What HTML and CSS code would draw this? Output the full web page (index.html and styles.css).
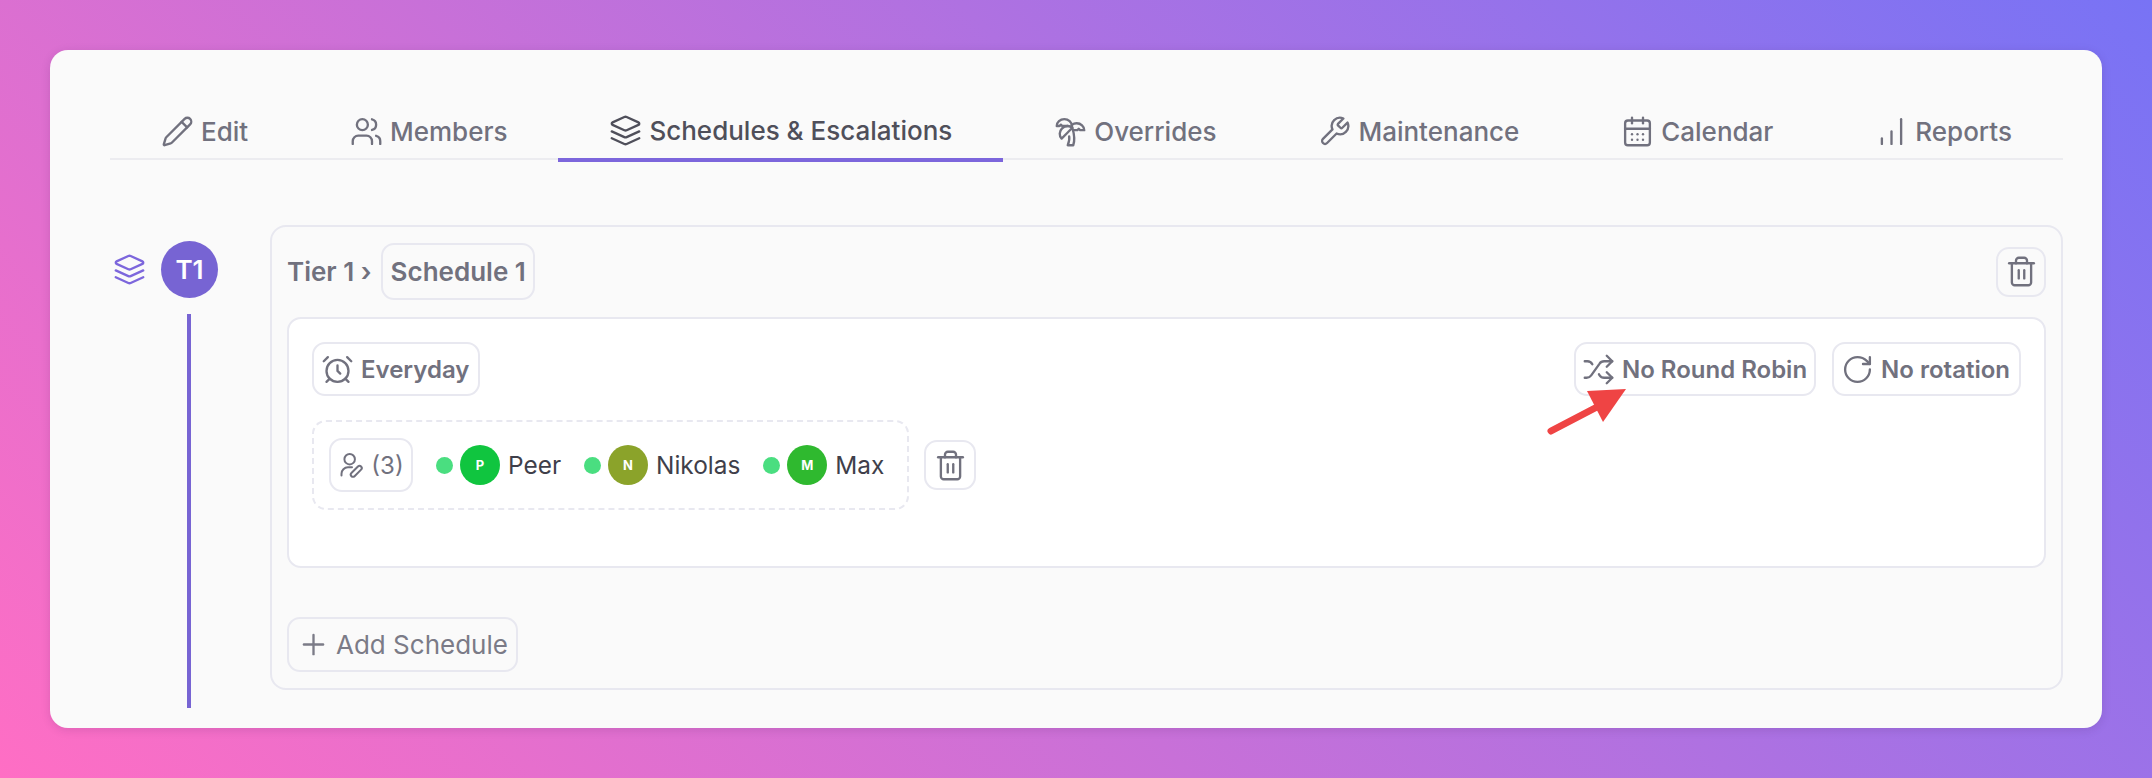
FILE: index.html
```html
<!DOCTYPE html>
<html lang="en">
<head>
<meta charset="utf-8">
<title>Schedules &amp; Escalations</title>
<link rel="stylesheet" href="styles.css">
</head>
<body>
<svg class="sprite" xmlns="http://www.w3.org/2000/svg" aria-hidden="true">
  <symbol id="i-pencil" viewBox="0 0 24 24"><path d="M21.174 6.812a1 1 0 0 0-3.986-3.987L3.842 16.174a2 2 0 0 0-.5.83l-1.321 4.352a.5.5 0 0 0 .623.622l4.353-1.32a2 2 0 0 0 .83-.497z"/><path d="m15 5 4 4"/></symbol>
  <symbol id="i-users" viewBox="0 0 24 24"><path d="M16 21v-2a4 4 0 0 0-4-4H6a4 4 0 0 0-4 4v2"/><circle cx="9" cy="7" r="4"/><path d="M22 21v-2a4 4 0 0 0-3-3.87"/><path d="M16 3.13a4 4 0 0 1 0 7.75"/></symbol>
  <symbol id="i-layers" viewBox="0 0 24 24"><path d="m12.83 2.18a2 2 0 0 0-1.66 0L2.6 6.08a1 1 0 0 0 0 1.83l8.58 3.91a2 2 0 0 0 1.66 0l8.58-3.9a1 1 0 0 0 0-1.83Z"/><path d="m22 17.65-9.17 4.16a2 2 0 0 1-1.66 0L2 17.65"/><path d="m22 12.65-9.17 4.16a2 2 0 0 1-1.66 0L2 12.65"/></symbol>
  <symbol id="i-palm" viewBox="0 0 24 24"><path d="M13 8c0-2.76-2.46-5-5.5-5S2 5.24 2 8h2l1-1 1 1h4"/><path d="M13 7.14A5.82 5.82 0 0 1 16.5 6c3.04 0 5.5 2.24 5.5 5h-3l-1-1-1 1h-3"/><path d="M5.89 9.71c-2.15 2.15-2.3 5.47-.35 7.43l4.24-4.25.7-.7.71-.71 2.12-2.12c-1.95-1.96-5.27-1.8-7.42.35"/><path d="M11 15.5c.5 2.5-.17 4.5-1 6.5h4c2-5.5-.5-12-1-14"/></symbol>
  <symbol id="i-wrench" viewBox="0 0 24 24"><path d="M14.7 6.3a1 1 0 0 0 0 1.4l1.6 1.6a1 1 0 0 0 1.4 0l3.77-3.77a6 6 0 0 1-7.94 7.94l-6.91 6.91a2.12 2.12 0 0 1-3-3l6.91-6.91a6 6 0 0 1 7.94-7.94l-3.76 3.76z"/></symbol>
  <symbol id="i-calendar" viewBox="0 0 24 24"><path d="M8 2v4"/><path d="M16 2v4"/><rect x="3" y="4" width="18" height="18" rx="2"/><path d="M3 10h18"/><path d="M8 14h.01"/><path d="M12 14h.01"/><path d="M16 14h.01"/><path d="M8 18h.01"/><path d="M12 18h.01"/><path d="M16 18h.01"/></symbol>
  <symbol id="i-bars" viewBox="0 0 24 24"><path d="M5 21v-4"/><path d="M12 21v-9"/><path d="M19 21V3"/></symbol>
  <symbol id="i-alarm" viewBox="0 0 24 24"><circle cx="12" cy="13" r="8"/><path d="M12 9v4l2 2"/><path d="M5 3 2 6"/><path d="m22 6-3-3"/><path d="M6.38 18.7 4 21"/><path d="M17.64 18.67 20 21"/></symbol>
  <symbol id="i-shuffle" viewBox="0 0 24 24"><path d="M2 18h1.4c1.3 0 2.5-.6 3.3-1.7l6.1-8.6c.7-1.1 2-1.7 3.3-1.7H22"/><path d="m18 2 4 4-4 4"/><path d="M2 6h1.9c1.5 0 2.9.9 3.6 2.2"/><path d="M22 18h-5.9c-1.3 0-2.6-.7-3.3-1.8l-.5-.8"/><path d="m18 14 4 4-4 4"/></symbol>
  <symbol id="i-rotate" viewBox="0 0 24 24"><path d="M21 12a9 9 0 1 1-9-9c2.52 0 4.93 1 6.74 2.74L21 8"/><path d="M21 3v5h-5"/></symbol>
  <symbol id="i-trash" viewBox="0 0 24 24"><path d="M3 6h18"/><path d="M19 6v14c0 1-1 2-2 2H7c-1 0-2-1-2-2V6"/><path d="M8 6V4c0-1 1-2 2-2h4c1 0 2 1 2 2v2"/><path d="M10 11v6"/><path d="M14 11v6"/></symbol>
  <symbol id="i-plus" viewBox="0 0 24 24"><path d="M5 12h14"/><path d="M12 5v14"/></symbol>
  <symbol id="i-user-edit" viewBox="0 0 24 24"><circle cx="10" cy="7" r="4.5"/><path d="M3 21v-1.5A5.5 5.5 0 0 1 8.5 14H12"/><path d="M14.2 21.6a1.9 1.9 0 0 1-2.7-2.7l5.6-5.6a1.9 1.9 0 0 1 2.7 2.7z"/></symbol>
</svg>

<main class="window">
  <nav class="tabs">
    <a class="tab"><svg class="icon"><use href="#i-pencil"/></svg>Edit</a>
    <a class="tab"><svg class="icon"><use href="#i-users"/></svg>Members</a>
    <a class="tab tab-active"><svg class="icon"><use href="#i-layers"/></svg>Schedules &amp; Escalations</a>
    <a class="tab"><svg class="icon"><use href="#i-palm"/></svg>Overrides</a>
    <a class="tab"><svg class="icon"><use href="#i-wrench"/></svg>Maintenance</a>
    <a class="tab"><svg class="icon"><use href="#i-calendar"/></svg>Calendar</a>
    <a class="tab"><svg class="icon"><use href="#i-bars"/></svg>Reports</a>
  </nav>

  <section class="tier">
    <div class="rail">
      <div class="rail-head">
        <svg class="icon icon-purple"><use href="#i-layers"/></svg>
        <span class="badge">T1</span>
      </div>
      <div class="rail-line"></div>
    </div>

    <div class="tier-card">
      <header class="tier-head">
        <div class="crumbs">
          <span class="crumb">Tier 1 ›</span>
          <button class="btn btn-title">Schedule 1</button>
        </div>
        <button class="btn btn-square"><svg class="icon"><use href="#i-trash"/></svg></button>
      </header>

      <div class="schedule">
        <div class="schedule-top">
          <button class="btn btn-pill btn-roomy"><svg class="icon"><use href="#i-alarm"/></svg>Everyday</button>
          <div class="schedule-actions">
            <button class="btn btn-pill"><svg class="icon"><use href="#i-shuffle"/></svg>No Round Robin</button>
            <button class="btn btn-pill btn-roomy"><svg class="icon"><use href="#i-rotate"/></svg>No rotation</button>
          </div>
        </div>
        <div class="members-row">
          <div class="members">
            <button class="btn btn-count"><svg class="icon icon-sm"><use href="#i-user-edit"/></svg>(3)</button>
            <div class="person"><i class="dot"></i><span class="avatar avatar-p">P</span><span class="name">Peer</span></div>
            <div class="person"><i class="dot"></i><span class="avatar avatar-n">N</span><span class="name">Nikolas</span></div>
            <div class="person"><i class="dot"></i><span class="avatar avatar-m">M</span><span class="name">Max</span></div>
          </div>
          <button class="btn btn-square btn-white"><svg class="icon"><use href="#i-trash"/></svg></button>
        </div>
      </div>

      <button class="btn btn-add"><svg class="icon"><use href="#i-plus"/></svg>Add Schedule</button>
    </div>
  </section>
</main>

<svg class="arrow" viewBox="0 0 90 50" xmlns="http://www.w3.org/2000/svg" aria-hidden="true">
  <path class="arrow-shaft" d="M4 45 50 21"/>
  <path class="arrow-head" d="M40 5 79 3 56 36z"/>
</svg>
</body>
</html>
```

FILE: styles.css
```css
* { box-sizing: border-box; }

html, body { height: 100%; }

body {
  margin: 0;
  padding: 50px;
  height: 778px;
  overflow: hidden;
  position: relative;
  background: linear-gradient(45deg, #ff6ec4, #7873f5);
  font-family: Inter, "Liberation Sans", sans-serif;
  color: #71717e;
}

.sprite { display: none; }

.icon {
  width: 33px;
  height: 33px;
  flex: none;
  fill: none;
  stroke: currentColor;
  stroke-width: 1.7;
  stroke-linecap: round;
  stroke-linejoin: round;
}

.icon-sm { width: 28px; height: 28px; }
.icon-purple { color: #7c66dc; }

.window {
  height: 678px;
  background: #fafafa;
  border-radius: 18px;
  padding: 50px 39px 20px 60px;
  display: flex;
  flex-direction: column;
  box-shadow: 0 2px 10px rgba(60, 30, 90, .15);
}

.tabs {
  display: flex;
  border-bottom: 2px solid #ececf0;
  height: 60px;
  flex: none;
}

.tab {
  flex: 1 1 auto;
  display: flex;
  align-items: center;
  justify-content: center;
  gap: 7px;
  padding: 0 50px;
  height: 62px;
  font-size: 26px;
  font-weight: 500;
  color: #71717e;
}

.tab-active {
  color: #4f4f5a;
  border-bottom: 4px solid #7c66dc;
  padding-top: 2px;
}

.tier {
  flex: 1;
  display: flex;
  margin-top: 65px;
  min-height: 0;
}

.rail {
  width: 160px;
  flex: none;
  padding-left: 3px;
  padding-top: 16px;
  display: flex;
  flex-direction: column;
}

.rail-head {
  display: flex;
  align-items: center;
  gap: 15px;
  height: 57px;
}

.badge {
  width: 57px;
  height: 57px;
  border-radius: 50%;
  background: #7764d3;
  color: #fff;
  display: flex;
  align-items: center;
  justify-content: center;
  font-size: 26px;
  font-weight: 600;
}

.rail-line {
  flex: 1;
  width: 4px;
  margin: 16px 0 0 74px;
  background: #7764d3;
}

.tier-card {
  flex: 1;
  height: 465px;
  border: 2px solid #e8e8f0;
  border-radius: 16px;
  padding: 16px 15px;
  display: flex;
  flex-direction: column;
  align-items: stretch;
}

.tier-head {
  display: flex;
  align-items: center;
  justify-content: space-between;
  height: 57px;
  margin-bottom: 17px;
}

.crumbs {
  display: flex;
  align-items: center;
  gap: 9px;
}

.crumb {
  font-size: 26px;
  font-weight: 600;
}

.btn {
  font: inherit;
  color: #71717e;
  background: transparent;
  border: 2px solid #e8e8f0;
  border-radius: 13px;
  display: inline-flex;
  align-items: center;
  justify-content: center;
}

.btn-title {
  height: 57px;
  padding: 0 7px 0 8px;
  font-size: 26px;
  font-weight: 600;
}

.btn-square {
  width: 50px;
  height: 50px;
  padding: 0;
}

.btn-white { background: #fff; width: 52px; }

.btn-pill {
  height: 54px;
  padding: 0 7px 0 6px;
  gap: 7px;
  font-size: 24px;
  font-weight: 600;
  background: #fff;
}

.btn-roomy { padding: 0 9px 0 7px; }

.btn-count {
  height: 54px;
  width: 84px;
  gap: 5px;
  font-size: 24px;
  font-weight: 400;
  background: #fff;
}

.btn-add {
  align-self: flex-start;
  height: 57px;
  margin-top: 49px;
  padding: 0 8px;
  gap: 6px;
  font-size: 26px;
  font-weight: 400;
  color: #7b7b87;
}

.schedule {
  height: 251px;
  flex: none;
  background: #fff;
  border: 2px solid #e8e8f0;
  border-radius: 14px;
  padding: 23px 23px;
}

.schedule-top {
  display: flex;
  justify-content: space-between;
  align-items: center;
}

.schedule-actions {
  display: flex;
  gap: 16px;
}

.members-row {
  display: flex;
  align-items: center;
  gap: 15px;
  margin-top: 24px;
}

.members {
  display: flex;
  align-items: center;
  gap: 23px;
  width: 597px;
  height: 90px;
  padding: 0 15px;
  border: 2px dashed #e8e8f0;
  border-radius: 14px;
}

.person {
  display: flex;
  align-items: center;
  gap: 7px;
}

.dot {
  width: 17px;
  height: 17px;
  border-radius: 50%;
  background: #4ade80;
}

.avatar {
  width: 40px;
  height: 40px;
  border-radius: 50%;
  color: #fff;
  font-size: 13px;
  font-weight: 700;
  display: flex;
  align-items: center;
  justify-content: center;
}

.avatar-p { background: #10c53f; }
.avatar-n { background: #8ba32a; }
.avatar-m { background: #2fb92f; }

.name {
  margin-left: 1px;
  font-size: 24.4px;
  font-weight: 400;
  color: #3f3f4a;
}

.arrow {
  position: absolute;
  left: 1547px;
  top: 386px;
  width: 90px;
  height: 50px;
}

.arrow-shaft {
  fill: none;
  stroke: #ef4444;
  stroke-width: 7;
  stroke-linecap: round;
}

.arrow-head { fill: #ef4444; }
```
